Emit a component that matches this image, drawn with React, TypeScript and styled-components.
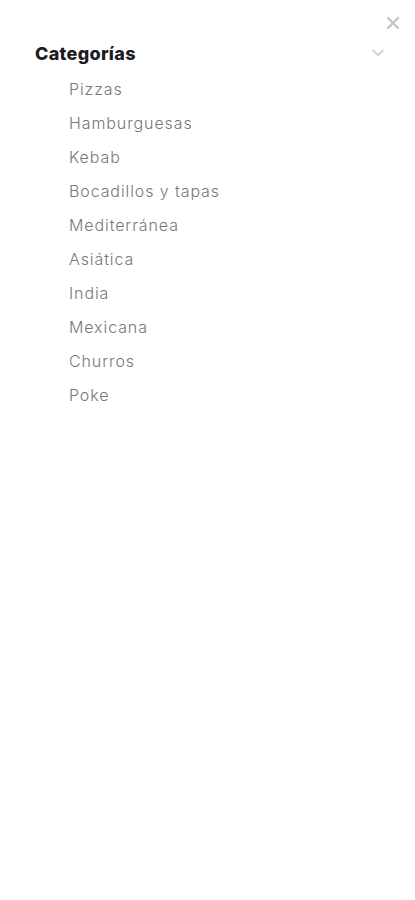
import React from "react";
import styled, { createGlobalStyle } from "styled-components";

const GlobalStyle = createGlobalStyle`
  body {
    margin: 0;
    background: #ffffff;
    font-family: "Inter", "Noto Sans", sans-serif;
  }
`;

const Panel = styled.div`
  width: 415px;
  min-height: 900px;
  box-sizing: border-box;
  position: relative;
  padding: 40px 30px 0 35px;
`;

const CloseButton = styled.button`
  position: absolute;
  top: 14px;
  right: 13px;
  width: 18px;
  height: 18px;
  padding: 0;
  border: none;
  background: none;
  display: flex;
  align-items: center;
  justify-content: center;
`;

const SectionHeader = styled.div`
  display: flex;
  align-items: center;
  justify-content: space-between;
  height: 26px;
`;

const Title = styled.h2`
  margin: 0;
  font-size: 18px;
  font-weight: 800;
  color: #1c1c22;
  letter-spacing: 0.3px;
`;

const CategoryList = styled.ul`
  list-style: none;
  margin: 6px 0 0;
  padding: 0 0 0 34px;
  display: flex;
  flex-direction: column;
`;

const CategoryItem = styled.li`
  height: 34px;
  display: flex;
  align-items: center;
  font-size: 16px;
  font-weight: 300;
  color: #77777c;
  letter-spacing: 0.9px;
`;

const categories = [
  "Pizzas",
  "Hamburguesas",
  "Kebab",
  "Bocadillos y tapas",
  "Mediterránea",
  "Asiática",
  "India",
  "Mexicana",
  "Churros",
  "Poke",
];

const App = (): JSX.Element => {
  return (
    <>
      <GlobalStyle />
      <Panel>
        <CloseButton aria-label="Cerrar">
          <svg width="14" height="14" viewBox="0 0 14 14">
            <path d="M2 2 L12 12 M12 2 L2 12" stroke="#c4c4ca" strokeWidth="2.4" strokeLinecap="round" />
          </svg>
        </CloseButton>
        <SectionHeader>
          <Title>Categorías</Title>
          <svg width="14" height="8" viewBox="0 0 14 8">
            <path d="M2 1.5 L7 6 L12 1.5" stroke="#cfcfd4" strokeWidth="1.8" fill="none" strokeLinecap="round" />
          </svg>
        </SectionHeader>
        <CategoryList>
          {categories.map((c) => (
            <CategoryItem key={c}>{c}</CategoryItem>
          ))}
        </CategoryList>
      </Panel>
    </>
  );
};

export default App;
